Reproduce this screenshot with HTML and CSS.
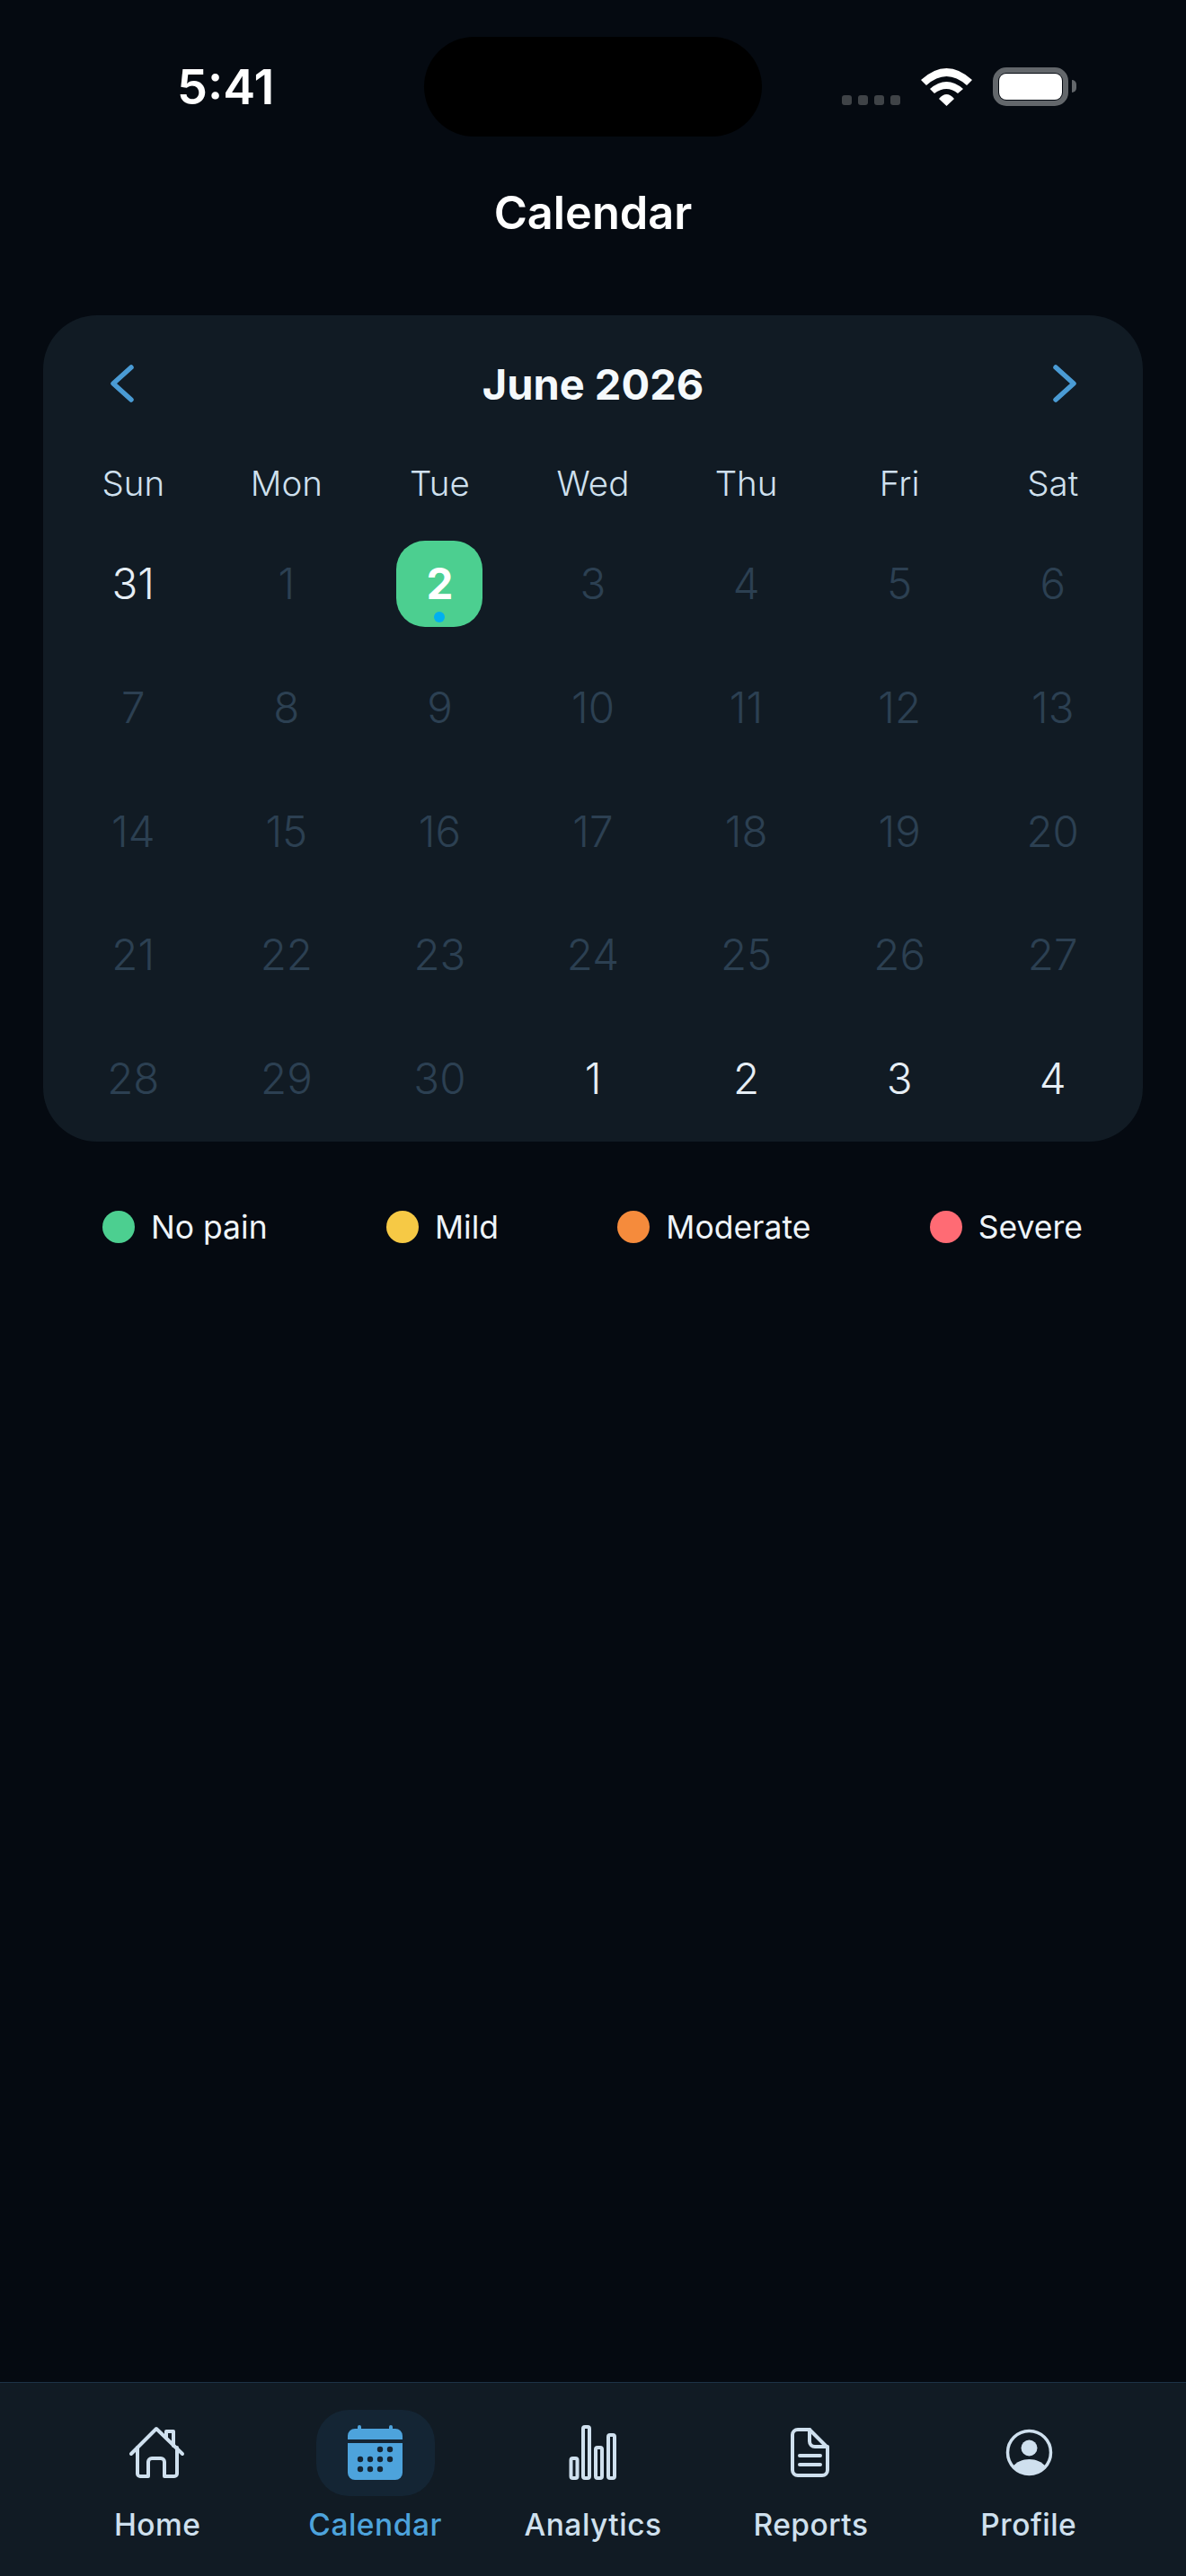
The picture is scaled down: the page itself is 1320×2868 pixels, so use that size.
FILE: index.html
```html
<!DOCTYPE html>
<html lang="en">
<head>
    <meta charset="UTF-8">
    <meta name="viewport" content="width=device-width, initial-scale=1.0">
    <title>Calendar</title>
    <link rel="stylesheet" href="styles.css">
</head>
<body>

<div class="screen">
    <!-- Status bar -->
    <div class="status-bar">
        <div class="status-time">5:41</div>
        <div class="status-island"></div>
        <div class="status-icons">
            <div class="signal"><span></span><span></span><span></span><span></span></div>
            <svg class="wifi" width="57" height="42" viewBox="0 0 57 42">
                <path d="M0 13Q28.5 -13 57 13L51 19Q28.5 -1 6 19Z"/>
                <path d="M10 23Q28.5 7 47 23L41 28Q28.5 18 15 28Z"/>
                <path d="M20 34Q28.5 24 37 34L28.5 42Z"/>
            </svg>
            <div class="battery"><div class="battery-fill"></div></div>
        </div>
    </div>

    <h1 class="page-title">Calendar</h1>

    <!-- Month card -->
    <div class="calendar-card">
        <div class="month-header">
            <svg class="chevron" width="48" height="48" viewBox="0 0 48 48"><path d="M35 6L15 24L35 42"/></svg>
            <div class="month-name">June 2026</div>
            <svg class="chevron" width="48" height="48" viewBox="0 0 48 48"><path d="M14 6L34 24L14 42"/></svg>
        </div>

        <div class="weekdays">
            <div>Sun</div><div>Mon</div><div>Tue</div><div>Wed</div><div>Thu</div><div>Fri</div><div>Sat</div>
        </div>

        <div class="days">
            <div class="day day-bright">31</div>
            <div class="day">1</div>
            <div class="day"><div class="day-selected">2<span class="day-dot"></span></div></div>
            <div class="day">3</div>
            <div class="day">4</div>
            <div class="day">5</div>
            <div class="day">6</div>

            <div class="day">7</div>
            <div class="day">8</div>
            <div class="day">9</div>
            <div class="day">10</div>
            <div class="day">11</div>
            <div class="day">12</div>
            <div class="day">13</div>

            <div class="day">14</div>
            <div class="day">15</div>
            <div class="day">16</div>
            <div class="day">17</div>
            <div class="day">18</div>
            <div class="day">19</div>
            <div class="day">20</div>

            <div class="day">21</div>
            <div class="day">22</div>
            <div class="day">23</div>
            <div class="day">24</div>
            <div class="day">25</div>
            <div class="day">26</div>
            <div class="day">27</div>

            <div class="day">28</div>
            <div class="day">29</div>
            <div class="day">30</div>
            <div class="day day-bright">1</div>
            <div class="day day-bright">2</div>
            <div class="day day-bright">3</div>
            <div class="day day-bright">4</div>
        </div>
    </div>

    <!-- Pain legend -->
    <div class="legend">
        <div class="legend-item"><span class="legend-dot dot-none"></span>No pain</div>
        <div class="legend-item"><span class="legend-dot dot-mild"></span>Mild</div>
        <div class="legend-item"><span class="legend-dot dot-moderate"></span>Moderate</div>
        <div class="legend-item"><span class="legend-dot dot-severe"></span>Severe</div>
    </div>

    <!-- Bottom tabs -->
    <div class="tab-bar">
        <div class="tab">
            <div class="tab-icon">
                <svg class="icon-line" width="64" height="64" viewBox="0 0 64 64">
                    <path d="M3 33L31 5L60 33"/>
                    <path d="M10 26V55a3 3 0 0 0 3 3H22V42a4 4 0 0 1 4-4H36a4 4 0 0 1 4 4V58H51a3 3 0 0 0 3-3V26"/>
                    <path d="M42 15V8H50V24"/>
                </svg>
            </div>
            <div class="tab-label">Home</div>
        </div>
        <div class="tab tab-active">
            <div class="tab-icon">
                <svg width="64" height="64" viewBox="0 0 64 64">
                    <path class="cal-fill" d="M1 17V13a8 8 0 0 1 8-8H12V3a2 2 0 0 1 4 0V5H47V3a2 2 0 0 1 4 0V5H54a8 8 0 0 1 8 8V17Z"/>
                    <path class="cal-fill" d="M1 21H62V54a8 8 0 0 1-8 8H9a8 8 0 0 1-8-8Z"/>
                    <g class="cal-dots">
                        <circle cx="37" cy="28" r="3.2"/><circle cx="48" cy="28" r="3.2"/>
                        <circle cx="15" cy="39" r="3.2"/><circle cx="26" cy="39" r="3.2"/><circle cx="37" cy="39" r="3.2"/><circle cx="48" cy="39" r="3.2"/>
                        <circle cx="15" cy="50" r="3.2"/><circle cx="26" cy="50" r="3.2"/><circle cx="37" cy="50" r="3.2"/>
                    </g>
                </svg>
            </div>
            <div class="tab-label">Calendar</div>
        </div>
        <div class="tab">
            <div class="tab-icon">
                <svg class="icon-line" width="64" height="64" viewBox="0 0 64 64">
                    <rect x="7.5" y="38" width="7" height="22" rx="2"/>
                    <rect x="21" y="3" width="7" height="57" rx="2"/>
                    <rect x="35" y="26" width="7" height="34" rx="2"/>
                    <rect x="49" y="12" width="7" height="48" rx="2"/>
                </svg>
            </div>
            <div class="tab-label">Analytics</div>
        </div>
        <div class="tab">
            <div class="tab-icon">
                <svg class="icon-line" width="64" height="64" viewBox="0 0 64 64">
                    <path d="M18 6H31L51 26V51a6 6 0 0 1-6 6H18a6 6 0 0 1-6-6V12a6 6 0 0 1 6-6Z"/>
                    <path d="M31 6V19a6 6 0 0 0 6 6H51"/>
                    <path d="M20 35H43M20 45H43"/>
                </svg>
            </div>
            <div class="tab-label">Reports</div>
        </div>
        <div class="tab">
            <div class="tab-icon">
                <svg width="64" height="64" viewBox="0 0 64 64">
                    <circle class="profile-ring" cx="32.5" cy="31.5" r="24"/>
                    <circle class="profile-fill" cx="32.5" cy="26.5" r="9"/>
                    <path class="profile-fill" d="M14.5 47C18 42 25 39 32.5 39C40 39 47 42 50.5 47C46 52 40 55.5 32.5 55.5C25 55.5 19 52 14.5 47Z"/>
                </svg>
            </div>
            <div class="tab-label">Profile</div>
        </div>
    </div>
</div>

</body>
</html>
```

FILE: styles.css
```css
* {
    box-sizing: border-box;
}
body {
    margin: 0;
    padding: 0;
    background-color: #050a11;
    font-family: Inter, "Liberation Sans", sans-serif;
}
.screen {
    width: 1320px;
    height: 2868px;
    display: flex;
    flex-direction: column;
    overflow: hidden;
}

/* status bar */
.status-bar {
    display: grid;
    grid-template-columns: 472px 376px 1fr;
    align-items: center;
    height: 111px;
    margin-top: 41px;
}
.status-time {
    padding-left: 197px;
    font-size: 54px;
    font-weight: 600;
    color: #fff;
}
.status-island {
    height: 111px;
    background-color: #000;
    border-radius: 56px;
}
.status-icons {
    display: flex;
    align-items: center;
    gap: 23px;
    height: 43px;
    padding-left: 89px;
}
.signal {
    display: flex;
    gap: 7px;
    align-self: flex-end;
    margin-bottom: 1px;
}
.signal span {
    width: 11px;
    height: 11px;
    border-radius: 3px;
    background-color: #3f4347;
}
.wifi {
    fill: #fff;
}
.battery {
    position: relative;
    width: 84px;
    height: 43px;
    padding: 1px;
    border: 6px solid #63676b;
    border-radius: 15px;
}
.battery::after {
    content: "";
    position: absolute;
    left: 82px;
    top: 8px;
    width: 5px;
    height: 14px;
    background-color: #63676b;
    border-radius: 0 5px 5px 0;
}
.battery-fill {
    height: 100%;
    background-color: #fff;
    border-radius: 8px;
}

.page-title {
    margin: 60px 0 0;
    height: 50px;
    line-height: 50px;
    text-align: center;
    font-size: 50.5px;
    font-weight: 600;
    color: #fff;
}

/* calendar card */
.calendar-card {
    margin: 89px 48px 0;
    height: 920px;
    padding: 52px 15px 0;
    background-color: #111b24;
    border-radius: 60px;
}
.month-header {
    display: flex;
    justify-content: space-between;
    align-items: center;
    height: 48px;
    padding: 0 48px;
}
.chevron {
    fill: none;
    stroke: #4a9bd4;
    stroke-width: 5.5;
    stroke-linecap: round;
    stroke-linejoin: round;
}
.month-name {
    font-size: 47px;
    font-weight: 700;
    color: #f5f9fc;
}
.weekdays {
    display: grid;
    grid-template-columns: repeat(7, 1fr);
    height: 48px;
    margin-top: 63px;
    margin-bottom: 19px;
    line-height: 48px;
    text-align: center;
    font-size: 38.5px;
    font-weight: 300;
    color: #cfe0ee;
}
.days {
    display: grid;
    grid-template-columns: repeat(7, 1fr);
    grid-auto-rows: 137.7px;
}
.day {
    display: flex;
    justify-content: center;
    align-items: center;
    font-size: 47.5px;
    font-weight: 300;
    color: #2c4052;
}
.day-bright {
    color: #e6eef5;
}
.day-selected {
    position: relative;
    display: flex;
    justify-content: center;
    align-items: center;
    width: 96px;
    height: 96px;
    background-color: #4ccf90;
    border-radius: 32px;
    font-weight: 700;
    color: #fff;
}
.day-dot {
    position: absolute;
    left: 42px;
    bottom: 5px;
    width: 12px;
    height: 12px;
    background-color: #00b0f0;
    border-radius: 50%;
}

/* legend */
.legend {
    display: flex;
    justify-content: space-between;
    margin-top: 77px;
    padding: 0 115px 0 114px;
}
.legend-item {
    display: flex;
    align-items: center;
    gap: 18px;
    height: 36px;
    font-size: 35.5px;
    color: #eef4f9;
}
.legend-dot {
    width: 36px;
    height: 36px;
    border-radius: 50%;
}
.dot-none { background-color: #4ccf90; }
.dot-mild { background-color: #f6c945; }
.dot-moderate { background-color: #f58b3c; }
.dot-severe { background-color: #ff6b74; }

/* bottom tabs */
.tab-bar {
    display: flex;
    margin-top: auto;
    height: 216px;
    padding: 30px 54px 0;
    background-color: #111b24;
    border-top: 1px solid #1c3347;
}
.tab {
    flex: 1;
    display: flex;
    flex-direction: column;
    align-items: center;
}
.tab-icon {
    display: flex;
    justify-content: center;
    align-items: center;
    width: 132px;
    height: 96px;
    border-radius: 36px;
}
.tab-active .tab-icon {
    background-color: #142534;
}
.tab-label {
    margin-top: 12px;
    font-size: 33.5px;
    font-weight: 500;
    letter-spacing: 0.5px;
    color: #cfe0ee;
}
.tab-active .tab-label {
    color: #4da3dc;
}
.icon-line {
    fill: none;
    stroke: #cfe0ee;
    stroke-width: 4;
    stroke-linecap: round;
    stroke-linejoin: round;
}
.cal-fill {
    fill: #4da3dc;
}
.cal-dots {
    fill: #142534;
}
.profile-ring {
    fill: none;
    stroke: #cfe0ee;
    stroke-width: 3.5;
}
.profile-fill {
    fill: #cfe0ee;
}
```
